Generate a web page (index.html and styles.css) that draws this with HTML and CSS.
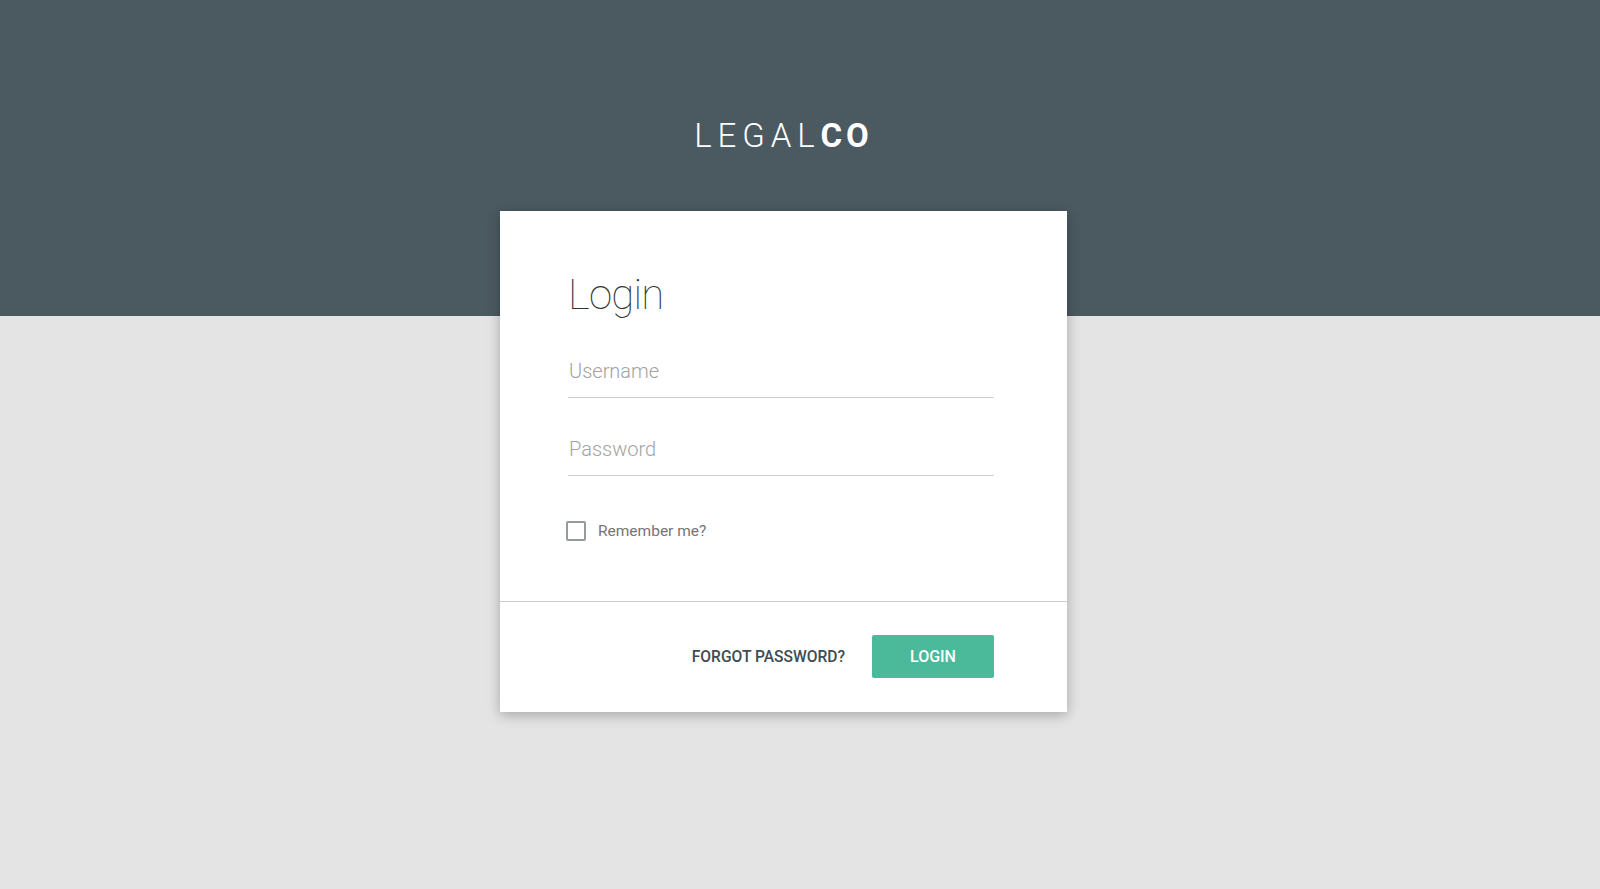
FILE: index.html
```html
<!DOCTYPE html>
<html>
<head>
<meta charset="utf-8">
<link rel="stylesheet" href="styles.css">
</head>
<body>
<div class="top"></div>
<div class="page">
  <div class="wrap">
    <div class="logo"><span class="light">LEGAL</span><span class="bold">CO</span></div>
    <div class="card">
      <div class="card-body">
        <h1 class="title">Login</h1>
        <input class="field" type="text" placeholder="Username">
        <input class="field" type="password" placeholder="Password">
        <label class="remember"><span class="box"></span><span class="remember-text">Remember me?</span></label>
      </div>
      <div class="card-foot">
        <a class="forgot">FORGOT PASSWORD?</a>
        <button class="btn">LOGIN</button>
      </div>
    </div>
  </div>
</div>
</body>
</html>
```
FILE: styles.css
```css
html, body {
  margin: 0;
  padding: 0;
}
body {
  background: #e4e4e4;
  font-family: Roboto, "Liberation Sans", sans-serif;
  height: 889px;
  overflow: hidden;
}
.top {
  height: 316px;
  background: #4b5961;
}
.page {
  margin-top: -316px;
}
.wrap {
  width: 600px;
  margin: 0 auto;
}
.logo {
  width: 567px;
  text-align: center;
  padding: 116px 0 55px 0;
  font-size: 33px;
  line-height: 40px;
  color: #fff;
  letter-spacing: 5.9px;
}
.logo .light {
  font-weight: 300;
}
.logo .bold {
  font-weight: 700;
  letter-spacing: 4px;
}
.card {
  width: 567px;
  background: #fff;
  box-shadow: 0 3px 12px rgba(0,0,0,0.28);
}
.card-body {
  padding: 59px 73px 60px 68px;
  display: flex;
  flex-direction: column;
}
.title {
  margin: 0;
  font-size: 42px;
  line-height: 50px;
  font-weight: 100;
  letter-spacing: -0.8px;
  color: #333;
}
.field {
  display: block;
  margin: 39px 0 0 0;
  padding: 0 0 14px 1px;
  height: 39px;
  box-sizing: border-box;
  border: none;
  border-bottom: 1px solid #cfcfcf;
  font-family: Roboto, "Liberation Sans", sans-serif;
  font-size: 20px;
  line-height: 24px;
  color: #333;
  outline: none;
  width: 100%;
  background: transparent;
}
.field::placeholder {
  color: #a3a3a3;
  font-weight: 300;
}
.remember {
  margin-top: 45px;
  display: flex;
  align-items: center;
  height: 20px;
  margin-left: -2px;
}
.box {
  width: 20px;
  height: 20px;
  box-sizing: border-box;
  border: 2px solid #959a9b;
  border-radius: 2px;
}
.remember-text {
  margin-left: 12px;
  font-size: 15.5px;
  color: #757575;
}
.card-foot {
  border-top: 1px solid #cccccc;
  padding: 33px 73px 34px 0;
  display: flex;
  justify-content: flex-end;
  align-items: center;
}
.forgot {
  font-size: 15.6px;
  font-weight: 500;
  color: #404c52;
  margin-right: 27px;
}
.btn {
  width: 122px;
  height: 43px;
  border: none;
  border-radius: 2px;
  background: #4aba9b;
  color: #fff;
  font-family: Roboto, "Liberation Sans", sans-serif;
  font-size: 16px;
  font-weight: 500;
}
```
